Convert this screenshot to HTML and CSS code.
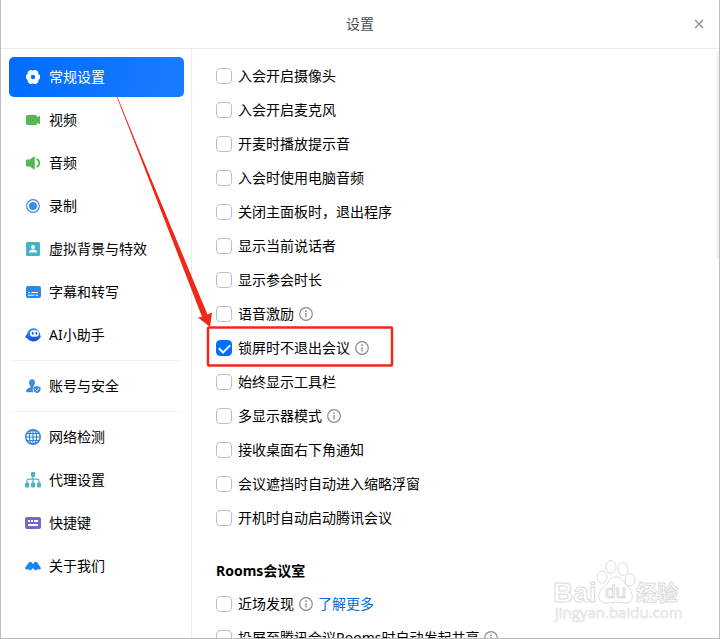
FILE: index.html
```html
<!DOCTYPE html>
<html lang="zh-CN">
<head>
<meta charset="utf-8">
<meta name="viewport" content="width=device-width, initial-scale=1">
<title>设置</title>
<link rel="stylesheet" href="styles.css">
</head>
<body>
<div class="window">
  <header class="titlebar">
    <h1 class="title">设置</h1>
    <button class="close" type="button" aria-label="关闭">
      <svg width="10" height="10" viewBox="0 0 10 10"><path d="M1 1l8 8M9 1l-8 8" stroke="#808692" stroke-width="1.1" fill="none"/></svg>
    </button>
  </header>
  <div class="body">
    <nav class="sidebar">
      <a class="item active" href="#general">
        <svg class="icon" viewBox="0 0 16 16"><path fill="#fff" fill-rule="evenodd" d="M5.300 1h1.500L8 1.700 9.200 1h1.500l2 1.200.6 1.300.1 1.400L15 6.500v3l-1.600 1.600-.1 1.400-.6 1.300-2 1.200H9.200L8 14.300 6.800 15H5.300l-2-1.200-.6-1.300-.1-1.400L1 9.500v-3l1.600-1.600.1-1.400.6-1.300zM8 5.800a2.200 2.200 0 1 0 0 4.400 2.200 2.200 0 0 0 0-4.400z"/></svg>
        <span>常规设置</span></a>
      <a class="item" href="#video">
        <svg class="icon" viewBox="0 0 16 16"><path fill="#55b654" d="M2.500 3h8a1.500 1.500 0 0 1 1.500 1.500v1l2-1.500h1v8h-1l-2-1.500v1a1.500 1.500 0 0 1-1.500 1.500h-8A1.500 1.500 0 0 1 1 11.500v-7A1.500 1.500 0 0 1 2.500 3z"/></svg>
        <span>视频</span></a>
      <a class="item" href="#audio">
        <svg class="icon" viewBox="0 0 16 16"><path fill="#55b654" d="M2 4.500h3l3.500-2.700c.7-.5 1.300-.2 1.300.6v11.200c0 .8-.6 1.100-1.300.6L5 11.500H2a1 1 0 0 1-1-1v-5a1 1 0 0 1 1-1z"/><path d="M11.500 4c3.700 1.200 3.700 6.800 0 8" stroke="#55b654" stroke-width="1.600" fill="none"/></svg>
        <span>音频</span></a>
      <a class="item" href="#record">
        <svg class="icon" viewBox="0 0 16 16"><circle cx="8" cy="8" r="6.300" fill="none" stroke="#3d8be6" stroke-width="1.200"/><circle cx="8" cy="8" r="4" fill="#3d8be6"/></svg>
        <span>录制</span></a>
      <a class="item" href="#background">
        <svg class="icon" viewBox="0 0 16 16"><rect x="1" y="1" width="14" height="14" rx="1.500" fill="#45b2c7"/><circle cx="8" cy="6" r="2" fill="#fff"/><path d="M4 11.500c0-4 8-4 8 0z" fill="#fff"/></svg>
        <span>虚拟背景与特效</span></a>
      <a class="item" href="#captions">
        <svg class="icon" viewBox="0 0 16 16"><rect x="1" y="2" width="15" height="12" rx="2" fill="#2589eb"/><path d="M3 8.500h2M6.500 8.500H13M3 11.200h6.500M10.500 11.200H13" stroke="#fff" stroke-width="1"/></svg>
        <span>字幕和转写</span></a>
      <a class="item" href="#assistant">
        <svg class="icon" viewBox="0 0 16 16"><defs><linearGradient id="bot" x1="0" y1="0" x2="0" y2="1"><stop offset="0" stop-color="#3797ff"/><stop offset="1" stop-color="#1747d2"/></linearGradient></defs><path d="M8.500 1.300C5 1.300 2.600 3.600 2.200 7 .6 8.400-.1 10 .6 11c.4.500 1 .4 1.500.1 1.500 2.200 3.500 3.300 6.200 3.300 3.100 0 5.500-1.300 6.700-3.700.8-.2 1.100-1.300.3-2.500C14.800 4 12.200 1.300 8.500 1.300z" fill="url(#bot)"/><rect x="4.800" y="3.300" width="9.200" height="6.500" rx="3.200" fill="#edf4ff"/><ellipse cx="7.700" cy="6.300" rx=".8" ry="1.400" fill="#1747bf"/><ellipse cx="11.400" cy="6.300" rx=".8" ry="1.400" fill="#1747bf"/></svg>
        <span>AI小助手</span></a>
      <hr class="separator">
      <a class="item" href="#account">
        <svg class="icon" viewBox="0 0 16 16"><path fill="#3c8de2" d="M7 1.200c2.100 0 3.200 1.600 3 3.500-.1 1.500-.7 2.600-1.400 3.300v1.200c-1 1.300-1.200 3 0 5H2a1 1 0 0 1-1-1c0-1.700 1.700-2.900 4.500-3.900V8C4.700 7.200 4.100 6.200 4 4.700c-.1-1.900 1-3.500 3-3.500z"/><path fill="#3c8de2" d="M12 8l3.500 1v2.600c0 1.700-1.300 2.900-3.500 3.600-2.200-.7-3.500-1.900-3.500-3.600V9z"/><path d="M10.300 11.300l1.400 1.400 2.200-2.200" stroke="#fff" stroke-width="1" fill="none"/></svg>
        <span>账号与安全</span></a>
      <hr class="separator">
      <a class="item" href="#network">
        <svg class="icon" viewBox="0 0 16 16"><g fill="none" stroke="#3583d6" stroke-width="1.200"><circle cx="8" cy="8" r="7.200" stroke-width="1.600"/><ellipse cx="8" cy="8" rx="3.600" ry="7"/><path d="M8 1v14M1 8h14M2.300 4.500h11.400M2.300 11.500h11.400"/></g></svg>
        <span>网络检测</span></a>
      <a class="item" href="#proxy">
        <svg class="icon" viewBox="0 0 16 16"><g fill="#4fb0c6"><rect x="6" y="0" width="4.200" height="5" rx="1.200"/><rect x="0" y="10.500" width="4.200" height="5" rx="1.200"/><rect x="6" y="10.500" width="4.200" height="5" rx="1.200"/><rect x="12" y="10.500" width="4" height="5" rx="1.200"/></g><path d="M8 4v7M2 11V9q0-1.800 1.800-1.800h8.400Q14 7.200 14 9v2" fill="none" stroke="#4fb0c6" stroke-width="1.200"/></svg>
        <span>代理设置</span></a>
      <a class="item" href="#shortcuts">
        <svg class="icon" viewBox="0 0 16 16"><rect x="0" y="2" width="16" height="12" rx="2" fill="#7468c9"/><path d="M3 6h2M6 6h2M9 6h4M3 10h10" stroke="#fff" stroke-width="1.800"/></svg>
        <span>快捷键</span></a>
      <a class="item" href="#about">
        <svg class="icon" viewBox="0 0 16 16"><path fill="#1685fa" d="M.2 9.700l3.600-5.100Q5.300 2.900 6.800 4.600L8 6.200l1.200-1.600q1.500-1.700 3 0l3.600 5.100q.4 1-.7 1.600-1.300.6-2.400-.3l-1.500 1.200q-1 .3-1.700-.4L8 10l-1.500 1.800q-.8.700-1.700.4L3.300 11q-1.100.9-2.400.3-1.100-.6-.7-1.600z"/></svg>
        <span>关于我们</span></a>
    </nav>
    <main class="content">
      <div class="row"><label class="option"><input type="checkbox">入会开启摄像头</label></div>
      <div class="row"><label class="option"><input type="checkbox">入会开启麦克风</label></div>
      <div class="row"><label class="option"><input type="checkbox">开麦时播放提示音</label></div>
      <div class="row"><label class="option"><input type="checkbox">入会时使用电脑音频</label></div>
      <div class="row"><label class="option"><input type="checkbox">关闭主面板时，退出程序</label></div>
      <div class="row"><label class="option"><input type="checkbox">显示当前说话者</label></div>
      <div class="row"><label class="option"><input type="checkbox">显示参会时长</label></div>
      <div class="row"><label class="option"><input type="checkbox">语音激励</label><svg class="info" viewBox="0 0 14 14"><use href="#info"/></svg></div>
      <div class="row"><label class="option"><input type="checkbox" checked>锁屏时不退出会议</label><svg class="info" viewBox="0 0 14 14"><use href="#info"/></svg></div>
      <div class="row"><label class="option"><input type="checkbox">始终显示工具栏</label></div>
      <div class="row"><label class="option"><input type="checkbox">多显示器模式</label><svg class="info" viewBox="0 0 14 14"><use href="#info"/></svg></div>
      <div class="row"><label class="option"><input type="checkbox">接收桌面右下角通知</label></div>
      <div class="row"><label class="option"><input type="checkbox">会议遮挡时自动进入缩略浮窗</label></div>
      <div class="row"><label class="option"><input type="checkbox">开机时自动启动腾讯会议</label></div>
      <h2 class="section">Rooms会议室</h2>
      <div class="row"><label class="option"><input type="checkbox">近场发现</label><svg class="info" viewBox="0 0 14 14"><use href="#info"/></svg><a class="more" href="#more">了解更多</a></div>
      <div class="row"><label class="option"><input type="checkbox">投屏至腾讯会议Rooms时自动发起共享</label><svg class="info" viewBox="0 0 14 14"><use href="#info"/></svg></div>
    </main>
    <div class="scrollbar"></div>
  </div>

  <svg class="annotation" width="400" height="370" viewBox="0 0 400 370" aria-hidden="true">
    <path d="M115 92L207.500 314.500L212 312.500L210 327L198 317.500L202 316.800Z" fill="#f02818"/>
    <path d="M116 94L204 314" stroke="#f02818" stroke-width=".7"/>
    <rect x="208" y="327.500" width="184" height="38" rx="1" fill="none" stroke="#f02818" stroke-width="2.500"/>
  </svg>

  <svg class="watermark" width="140" height="70" viewBox="0 0 140 70" aria-hidden="true">
    <g fill="#fff" stroke="#dcdcdc" stroke-width="1">
      <text class="wm-name" x="4" y="44">Bai</text>
      <ellipse cx="53" cy="19" rx="5" ry="6"/><ellipse cx="62" cy="9" rx="5" ry="6.500"/><ellipse cx="74" cy="11" rx="5" ry="6.500"/><ellipse cx="81" cy="22" rx="5" ry="6"/>
      <path d="M67 19c7 0 8 6 12 10 8 9 4 17-4 16-6-1-10-1-15 0-11 1-14-9-5-16 5-4 5-10 12-10z"/>
      <text class="wm-du" x="56" y="40">du</text>
      <text class="wm-cn" x="87" y="42">经验</text>
      <text class="wm-url" x="6" y="60">jingyan.baidu.com</text>
    </g>
  </svg>
</div>
<svg class="symbols" aria-hidden="true"><symbol id="info" viewBox="0 0 14 14"><circle cx="7" cy="7" r="6.300" fill="none" stroke="#858b96" stroke-width="1.200"/><circle cx="7" cy="4.200" r=".9" fill="#858b96"/><path d="M7 6v4.500" stroke="#858b96" stroke-width="1.300"/></symbol></svg>
</body>
</html>
```
FILE: styles.css
```css
* {
  box-sizing: border-box;
}

body {
  margin: 0;
  background: #fff;
  color: #000;
  font: 14px/20px "Noto Sans", "Noto Sans CJK SC", sans-serif;
}

.window {
  position: relative;
  display: flex;
  flex-direction: column;
  height: 100vh;
  overflow: hidden;
  border: 1px solid #bcbcbe;
  border-top: 0;
}

.titlebar {
  flex: none;
  display: grid;
  grid-template-columns: 1fr auto 1fr;
  align-items: center;
  height: 49px;
  padding: 0 12px;
  border-bottom: 1px solid #e8eaee;
}

.title {
  grid-column: 2;
  margin: 0;
  color: #4a4e57;
  font-size: 14px;
  font-weight: 400;
}

.close {
  justify-self: end;
  display: flex;
  align-items: center;
  justify-content: center;
  width: 16px;
  height: 16px;
  padding: 0;
  border: 0;
  background: none;
}

.body {
  flex: 1;
  display: flex;
  min-height: 0;
}

.sidebar {
  flex: none;
  display: flex;
  flex-direction: column;
  gap: 3px;
  width: 191px;
  padding: 8px 7px 0 8px;
  border-right: 1px solid #e8eaee;
}

.item {
  display: flex;
  align-items: center;
  gap: 8px;
  height: 40px;
  padding: 0 16px;
  border-radius: 5px;
  color: inherit;
  text-decoration: none;
}

.item.active {
  background: linear-gradient(100deg, #006cff, #1b7cff);
  color: #fff;
}

.icon {
  flex: none;
  width: 16px;
  height: 16px;
}

.separator {
  width: 168px;
  margin: 2px 3px;
  border: 0;
  border-top: 1px solid #f0f1f3;
}

.content {
  flex: 1;
  min-width: 0;
  overflow: hidden;
  padding: 10px 24px 0;
}

.row {
  display: flex;
  align-items: center;
  gap: 5px;
  height: 34px;
}

.option {
  display: flex;
  align-items: center;
  gap: 6px;
}

.option input {
  appearance: none;
  width: 16px;
  height: 16px;
  margin: 0;
  border: 1px solid #bcc0ca;
  border-radius: 4px;
  background: #fff;
}

.option input:checked {
  display: grid;
  align-content: start;
  justify-content: center;
  padding-top: 3px;
  border-color: #006fff;
  background: #006fff;
}

.option input:checked::before {
  content: "";
  width: 9px;
  height: 5px;
  border: solid #fff;
  border-width: 0 0 2px 2px;
  transform: rotate(-45deg);
}

.info {
  width: 14px;
  height: 14px;
}

.more {
  color: #0a6cdc;
  text-decoration: none;
}

.section {
  margin: 26px 0 6px;
  font-size: 14px;
  line-height: 20px;
  font-weight: 700;
}

.scrollbar {
  flex: none;
  width: 3px;
  height: 208px;
  margin-top: 2px;
  border-radius: 2px 0 0 2px;
  background: #f1f2f4;
}

.annotation {
  position: absolute;
  top: 0;
  left: -1px;
}

.watermark {
  position: absolute;
  right: 30px;
  bottom: 10px;
}

.wm-name {
  font: 700 28px "Liberation Sans", sans-serif;
}

.wm-du {
  font: 400 19px "Liberation Sans", sans-serif;
}

.wm-cn {
  font: 700 21px "Noto Sans CJK SC", sans-serif;
}

.wm-url {
  font: 400 15px "Open Sans", sans-serif;
  fill: #fafafa;
  stroke: #e0e0e0;
  stroke-width: 0.6px;
}

.symbols {
  position: absolute;
  width: 0;
  height: 0;
}
```
